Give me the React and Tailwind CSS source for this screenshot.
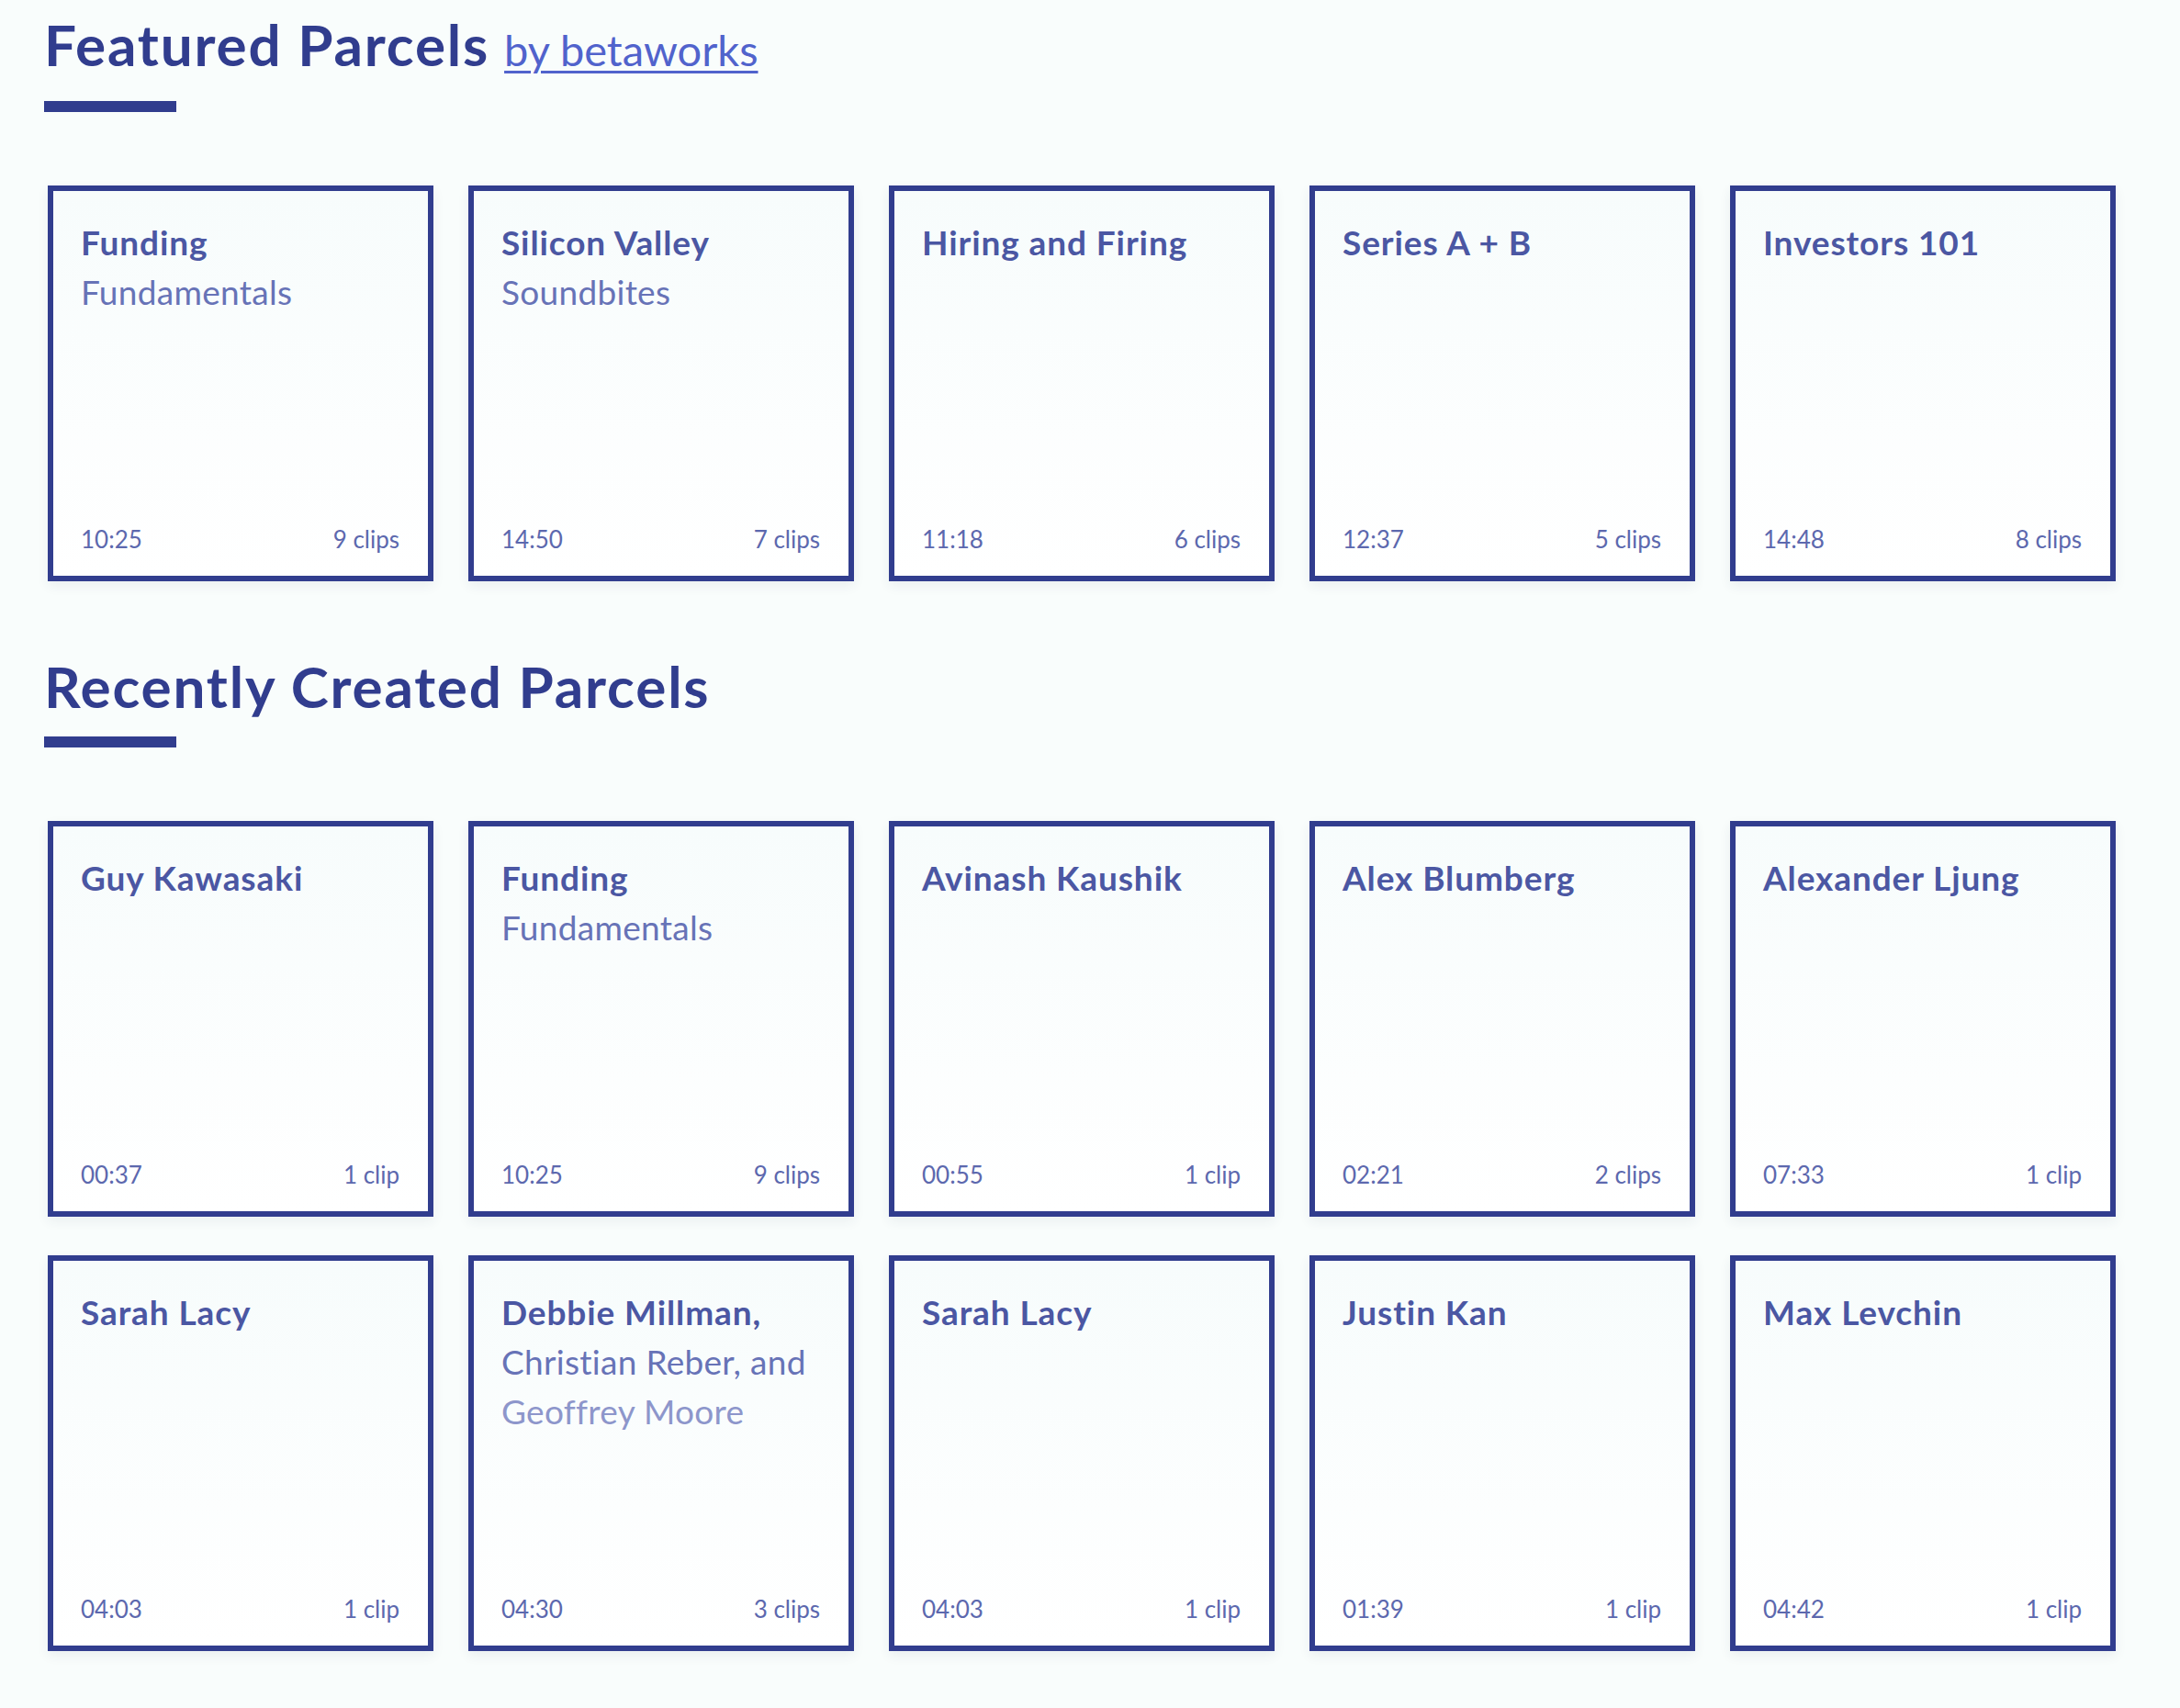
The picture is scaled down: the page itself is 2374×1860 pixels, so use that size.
import React from "react";

const featured = [
  { lines: ["Funding", "Fundamentals"], time: "10:25", clips: "9 clips" },
  { lines: ["Silicon Valley", "Soundbites"], time: "14:50", clips: "7 clips" },
  { lines: ["Hiring and Firing"], time: "11:18", clips: "6 clips" },
  { lines: ["Series A + B"], time: "12:37", clips: "5 clips" },
  { lines: ["Investors 101"], time: "14:48", clips: "8 clips" },
];

const recent = [
  { lines: ["Guy Kawasaki"], time: "00:37", clips: "1 clip" },
  { lines: ["Funding", "Fundamentals"], time: "10:25", clips: "9 clips" },
  { lines: ["Avinash Kaushik"], time: "00:55", clips: "1 clip" },
  { lines: ["Alex Blumberg"], time: "02:21", clips: "2 clips" },
  { lines: ["Alexander Ljung"], time: "07:33", clips: "1 clip" },
  { lines: ["Sarah Lacy"], time: "04:03", clips: "1 clip" },
  { lines: ["Debbie Millman,", "Christian Reber, and", "Geoffrey Moore"], time: "04:30", clips: "3 clips" },
  { lines: ["Sarah Lacy"], time: "04:03", clips: "1 clip" },
  { lines: ["Justin Kan"], time: "01:39", clips: "1 clip" },
  { lines: ["Max Levchin"], time: "04:42", clips: "1 clip" },
];

function Card({ lines, time, clips }) {
  return (
    <div className="h-[431px] border-[6px] border-[#313d8e] bg-gradient-to-b from-[#f7fcfc] to-white shadow-[0_5px_12px_rgba(40,50,90,0.07)] flex flex-col justify-between pl-[30px] pr-[31px] pt-[29px] pb-[24px]">
      <div className="text-[37px] leading-[54px]">
        {lines.map((l, i) => (
          <div
            key={i}
            className={
              i === 0
                ? "font-bold tracking-[0.9px] text-[#4b57a3]"
                : i === 1
                ? "font-normal tracking-[0.3px] text-[#6773b7]"
                : "font-normal tracking-[0.3px] text-[#8d96cb]"
            }
          >
            {l}
          </div>
        ))}
      </div>
      <div className="flex justify-between text-[26px] leading-[32px] font-normal text-[#5c68ae]">
        <span>{time}</span>
        <span>{clips}</span>
      </div>
    </div>
  );
}

export default function App() {
  return (
    <div className="min-h-screen bg-[#f9fdfc] font-['Lato','Liberation_Sans',sans-serif] pl-[48px] pb-[60px]">
      <h1 className="pt-[12px] text-[62px] leading-[72px] font-bold text-[#313d8e] tracking-[1.8px]">
        Featured Parcels
        <a
          href="#"
          className="ml-[16px] text-[47px] leading-none font-normal tracking-normal text-[#5163cc] underline decoration-[3px] underline-offset-[5px]"
        >
          by betaworks
        </a>
      </h1>
      <div className="mt-[26px] h-[12px] w-[144px] bg-[#313d8e]" />
      <div className="mt-[80px] ml-[4px] w-[2252px] grid grid-cols-5 gap-x-[38px] gap-y-[42px]">
        {featured.map((c, i) => (
          <Card key={i} {...c} />
        ))}
      </div>

      <h2 className="mt-[78px] text-[62px] leading-[72px] font-bold text-[#313d8e] tracking-[1.8px]">
        Recently Created Parcels
      </h2>
      <div className="mt-[19px] h-[12px] w-[144px] bg-[#313d8e]" />
      <div className="mt-[80px] ml-[4px] w-[2252px] grid grid-cols-5 gap-x-[38px] gap-y-[42px]">
        {recent.map((c, i) => (
          <Card key={i} {...c} />
        ))}
      </div>
    </div>
  );
}
